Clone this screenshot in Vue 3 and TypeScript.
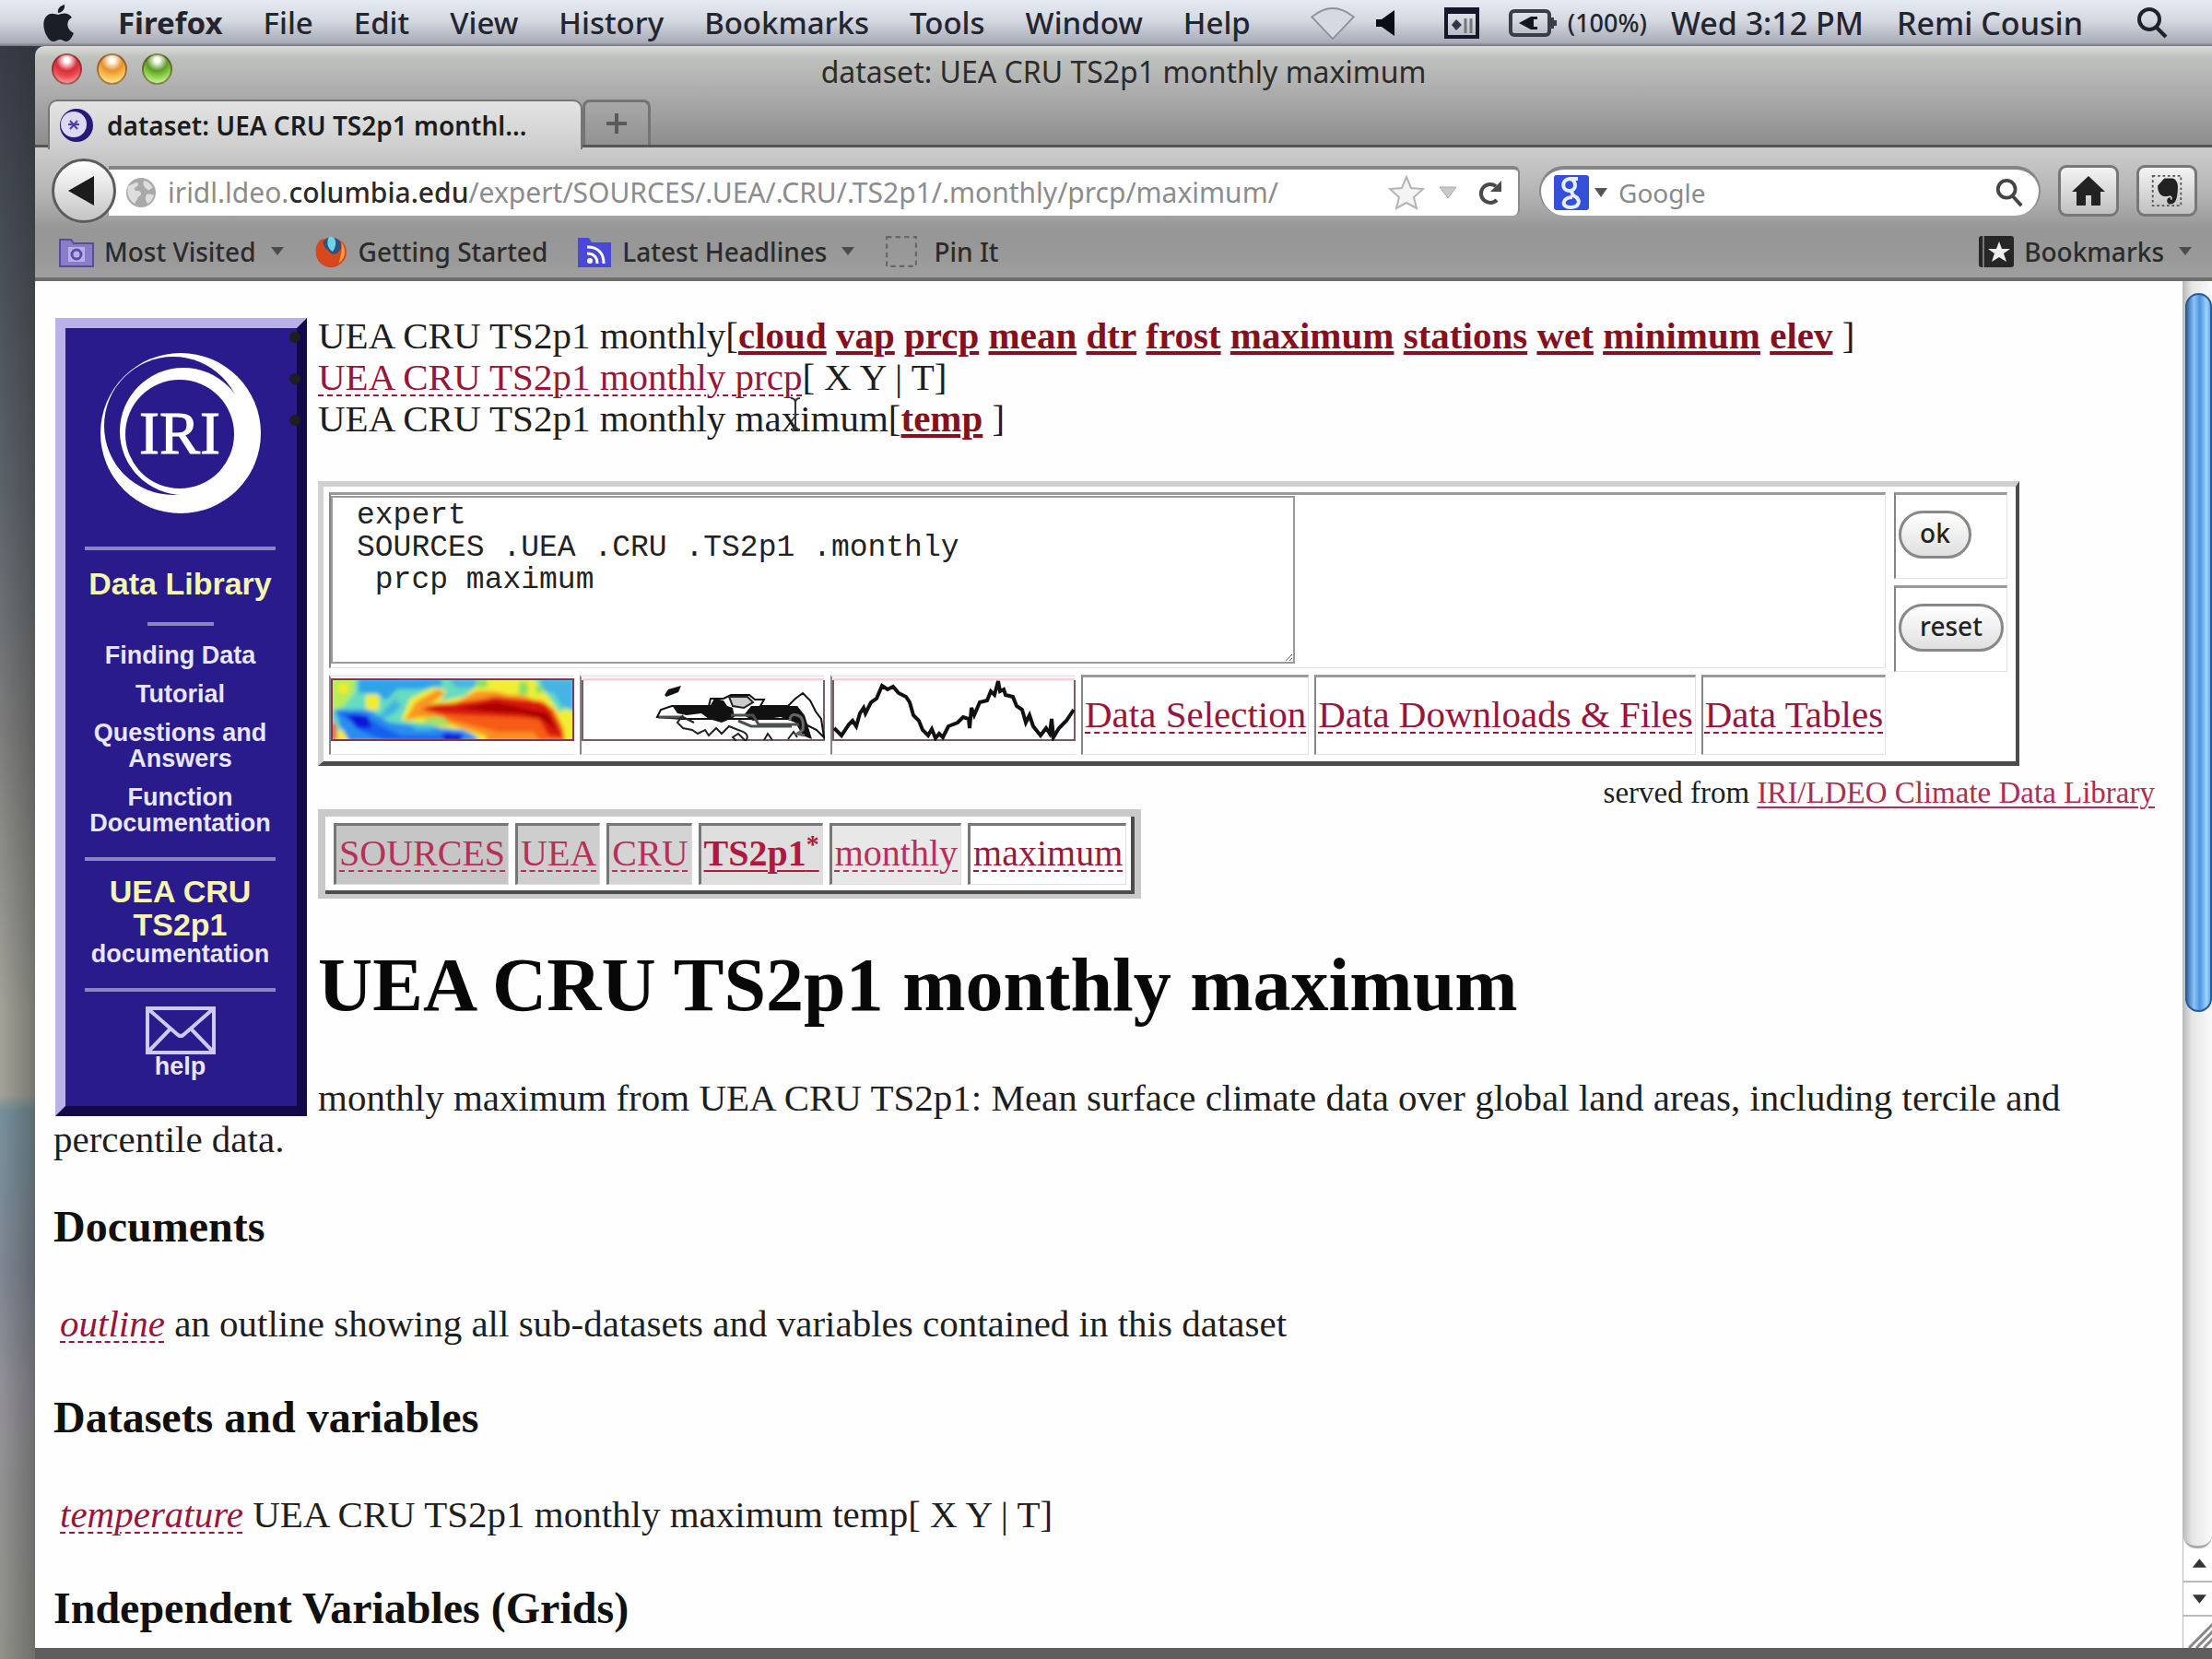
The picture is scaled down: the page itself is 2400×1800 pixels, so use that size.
<script setup lang="ts">
import { ref } from 'vue'

const menus = ['File', 'Edit', 'View', 'History', 'Bookmarks', 'Tools', 'Window', 'Help']
const variables = ['cloud', 'vap', 'prcp', 'mean', 'dtr', 'frost', 'maximum', 'stations', 'wet', 'minimum', 'elev']
const crumbs = [
  { label: 'SOURCES', shade: 's1' },
  { label: 'UEA', shade: 's2' },
  { label: 'CRU', shade: 's3' },
  { label: 'TS2p1', shade: 's4', strong: true },
  { label: 'monthly', shade: 's5' },
  { label: 'maximum', shade: 's6' },
]
const initial = 'expert\nSOURCES .UEA .CRU .TS2p1 .monthly\n prcp maximum'
const code = ref(initial)
const query = ref('')
</script>

<template>
  <div class="screen">
    <header class="menubar">
      <svg class="apple" viewBox="0 0 36 42"><path d="M24 1c1 5-3 9-7 9-1-5 3-8 7-9zM32 15c-7 4-6 13 2 17-2 5-5 9-8 9-3 0-4-2-7-2s-4 2-7 2C5 41-3 22 4 14c4-5 9-3 13-2 4-1 10-4 15 3z" /></svg>
      <nav class="menus">
        <button class="app-name">Firefox</button>
        <button v-for="m in menus" :key="m">{{ m }}</button>
      </nav>
      <div class="status">
        <svg class="wifi" viewBox="0 0 50 38"><path d="M1 12Q25-8 49 12L25 37Z" /></svg>
        <svg class="speaker" viewBox="0 0 20 28"><path d="M0 10h6L20 0v28L6 18H0z" /></svg>
        <svg class="input-menu" viewBox="0 0 38 34"><path d="M2 2h34v30H2z" fill="none" stroke="#15182a" stroke-width="4" /><path d="M2 1h34v6H2z" fill="#15182a" /><path d="M8 19l5-6 6 6-6 6z" fill="#33364a" /><path d="M23 12v16M29 12v16" stroke="#777" stroke-width="3" /></svg>
        <svg class="battery" viewBox="0 0 52 30"><rect x="2" y="2" width="42" height="26" rx="4" fill="none" stroke="#3a3c48" stroke-width="4" /><path d="M45 9h4v3h3v6h-3v3h-4z" fill="#3a3c48" /><path d="M11 15 24 8h7v3h-4v8h4v3h-7z" fill="#15171f" /></svg>
        <span class="percent">(100%)</span>
        <span>Wed 3:12 PM</span>
        <span class="user">Remi Cousin</span>
        <svg class="spot" viewBox="0 0 34 34"><circle cx="14" cy="13" r="11" /><path d="m21 21 11 11" /></svg>
      </div>
    </header>

    <div class="desktop">
      <main class="window">
        <div class="titlebar">
          <div class="lights"><i class="red"></i><i class="amber"></i><i class="green"></i></div>
          <div class="window-title">dataset: UEA CRU TS2p1 monthly maximum</div>
        </div>
        <div class="tabs">
          <button class="tab">
            <svg class="favicon" viewBox="0 0 38 38"><circle cx="19" cy="19" r="18" fill="#241a78" /><circle cx="16" cy="18" r="14" fill="#dcd8f6" /><path d="M12 14l8 9M20 14l-8 9M10 18h12" stroke="#4a3fa8" stroke-width="2" /></svg>
            <span>dataset: UEA CRU TS2p1 monthl...</span>
          </button>
          <button class="newtab" aria-label="New tab"><svg viewBox="0 0 26 26"><path d="M13 2v22M2 13h22" /></svg></button>
        </div>
        <div class="chrome">
          <div class="nav">
            <button class="back" aria-label="Back"><svg viewBox="0 0 28 32"><path d="M28 0v32L0 16z" /></svg></button>
            <div class="url" role="textbox" aria-label="Address">
              <svg class="globe" viewBox="0 0 34 34"><circle cx="17" cy="17" r="16" fill="#a9a9a9" /><path d="M3 10c4-1 9-6 11-3 1 3-5 4-4 7 2 2 7 0 7 4 0 3-4 3-4 6l-3 5C4 26 1 17 3 10zM20 4c4 0 8 4 10 8-3 0-3 3-6 2-2-2-6-5-4-10zM23 19c3-1 6 0 8 1-1 4-4 8-7 9-2-3-3-7-1-10z" fill="#dedede" /></svg>
              <span class="address">iridl.ldeo.<b>columbia.edu</b>/expert/SOURCES/.UEA/.CRU/.TS2p1/.monthly/prcp/maximum/</span>
              <svg class="star" viewBox="0 0 40 38"><path d="m20 2 5 12 13 1-10 9 3 12-11-6-11 6 3-12L2 15l13-1z" /></svg>
              <svg class="drop" viewBox="0 0 20 14"><path d="M1 1h18l-9 12z" /></svg>
              <svg class="reload" viewBox="0 0 28 30"><path d="M21 23A10 10 0 1 1 20 8" fill="none" stroke="#4a4a4a" stroke-width="4" /><path d="M26 2v12H14z" fill="#4a4a4a" /></svg>
            </div>
            <label class="search">
              <svg class="goog" viewBox="0 0 38 38"><rect width="38" height="38" rx="3" fill="#3450d8" /><path d="M26 4H17c-9 1-9 13 0 13 4 0 2 4 4 5 10 5 6 13-3 13-11 0-9-11 2-11M17 4c8 1 8 13 0 13" fill="none" stroke="#e8f0ff" stroke-width="4" /></svg>
              <svg class="mini" viewBox="0 0 14 10"><path d="M0 0h14L7 10z" /></svg>
              <input v-model="query" type="text" placeholder="Google" aria-label="Search" />
              <svg class="lens" viewBox="0 0 34 34"><circle cx="14" cy="13" r="10" /><path d="m20 20 11 12" /></svg>
            </label>
            <button class="square" aria-label="Home"><svg viewBox="0 0 36 32"><path d="M18 0 36 17h-5v15H21V21h-6v11H5V17H0z" /></svg></button>
            <button class="square" aria-label="Clipper"><svg viewBox="0 0 38 40"><rect x="2" y="2" width="34" height="36" fill="none" stroke="#555" stroke-width="2" stroke-dasharray="3 3" /><path d="M8 14 16 5h10c6 2 7 8 6 16-1 10-3 15-9 15-5 0-5-8 0-8l1 3c3 0 1-6-2-5-6 2-14 1-14-12z" /></svg></button>
          </div>
          <div class="bookmarks">
            <a href="#"><svg class="bm" viewBox="0 0 38 34"><path d="M1 4h12l3 4h21v25H1z" fill="#8a7cc6" stroke="#5a4c9c" stroke-width="2" /><path d="M10 12h18v16H10z" fill="#b9b0e4" /><circle cx="19" cy="20" r="5" fill="none" stroke="#5a4cb0" stroke-width="3" /></svg>Most Visited<i class="caret"></i></a>
            <a href="#"><svg class="bm" viewBox="0 0 38 38"><circle cx="19" cy="20" r="17" fill="#c83818" /><circle cx="20" cy="15" r="12" fill="#2a5580" /><path d="M17 2c8-2 10 9 4 17-5-3-8-10-4-17z" fill="#6fd4e8" /><path d="M2 14c2-6 5-9 8-10-1 6 1 10 6 14 3 4 8 6 12 1 4-4 4-8 2-13 8 6 9 17 3 24-8 9-26 8-30-5-1-4-2-7-1-11z" fill="#d8481c" /><path d="M31 8c6 8 5 19-3 24 3-8 4-16 3-24z" fill="#f0a040" /></svg>Getting Started</a>
            <a href="#"><svg class="bm" viewBox="0 0 38 36"><path d="M1 3h12l3 5h21v27H1z" fill="#4a48d8" /><circle cx="14" cy="28" r="3" fill="#fff" /><path d="M11 20c7 0 11 4 11 11M11 13c12 0 18 7 18 18" fill="none" stroke="#fff" stroke-width="3" /></svg>Latest Headlines<i class="caret"></i></a>
            <a href="#"><svg class="bm dotted" viewBox="0 0 34 34"><rect x="2" y="2" width="30" height="30" fill="none" stroke="#666" stroke-width="2" stroke-dasharray="5 4" /></svg>Pin It</a>
            <button class="bm-menu"><svg class="bm" viewBox="0 0 38 34"><rect width="38" height="34" rx="3" fill="#262626" /><path d="M5 0v34" stroke="#777" stroke-width="2" /><path d="m22 6 3 8h9l-7 5 3 9-8-5-8 5 3-9-7-5h9z" fill="#eee" /></svg>Bookmarks<i class="caret"></i></button>
          </div>
        </div>

        <div class="viewport">
          <div class="page">
            <aside class="sidebar">
              <svg class="logo" viewBox="0 0 176 176">
                <circle cx="88" cy="88" r="87" fill="#fff" />
                <circle cx="80" cy="80" r="75" fill="#291b8c" />
                <circle cx="91" cy="86" r="69" fill="#fff" />
                <circle cx="87" cy="89" r="59" fill="#291b8c" />
                <text x="87" y="110" text-anchor="middle">IRI</text>
              </svg>
              <hr />
              <a href="#" class="big">Data Library</a>
              <hr class="short" />
              <a href="#">Finding Data</a>
              <a href="#">Tutorial</a>
              <a href="#">Questions and<br />Answers</a>
              <a href="#">Function<br />Documentation</a>
              <hr />
              <a href="#" class="doc"><span class="big">UEA CRU<br />TS2p1</span><br />documentation</a>
              <hr />
              <a href="#" class="help"><svg viewBox="0 0 78 54"><path d="M3 3h72v48H3zM3 3l32 28q4 4 8 0L75 3M3 51l25-26M75 51 50 25" /></svg>help</a>
            </aside>

            <ul class="paths">
              <li>UEA CRU TS2p1 monthly[<template v-for="v in variables" :key="v"><a href="#" class="strong">{{ v }}</a>{{ ' ' }}</template>]</li>
              <li><a href="#" class="dash">UEA CRU TS2p1 monthly prcp</a>[ X Y | T]</li>
              <li>UEA CRU TS2p1 monthly ma<span class="hover">x<svg class="ibeam" viewBox="0 0 12 36"><path d="M1 1q5 0 5 5v24q0 5-5 5M11 1q-5 0-5 5v24q0 5 5 5" /></svg></span>imum[<a href="#" class="strong">temp</a> ]</li>
            </ul>

            <form class="expert" @submit.prevent @reset.prevent="code = initial">
              <div class="left">
                <div class="cell editor"><textarea v-model="code" aria-label="Expert code" spellcheck="false"></textarea></div>
                <div class="tools">
                  <a href="#" class="cell pic" aria-label="Colour plot">
                    <svg viewBox="0 0 264 68">
                      <defs>
                        <filter id="soft" x="0" y="0" width="1" height="1"><feGaussianBlur stdDeviation="2" /></filter>
                      </defs>
                      <g filter="url(#soft)">
                        <rect width="264" height="68" fill="#66dcc0" />
                        <path d="M30 0h90v8L95 12 72 12 60 24 50 16H30z" fill="#2fa4e8" />
                        <path d="M128 0h30l-2 10h-20zM228 0h36v34l-14-4-8-14-14-2z" fill="#45b4e4" />
                        <path d="M58 34 70 22 76 30 66 40 50 44z" fill="#40b4e0" />
                        <path d="M0 0h26v14L14 30 4 34H0z" fill="#b8ec58" />
                        <path d="M38 18h14v16H38zM8 6h10v10H8zM8 56h10v12H6z" fill="#f4ec20" />
                        <path d="M76 46 86 22l24-12 16 3-8 12 28-6 20-18h54l14 16 14 20 8-4 10 6v30H150l-36-18-38-6z" fill="#f0ee30" />
                        <path d="M158 2h12v8h-12zM204 4h10v14h-10zM222 8h8v8h-8z" fill="#8ae060" />
                        <path d="M80 46 92 26l24-14 8 4-18 14 30-4 22-12 20 0 16 4h14l22 10 8 22 4 18H184l-42-14-26-10-20-2z" fill="#fa9424" />
                        <path d="M94 50 108 42h14l8 10z" fill="#a8e060" />
                        <path d="M104 32 150 24l38-2 40 2 14 10 10 20 2 14H192l-12-10-54-14z" fill="#f65c14" />
                        <path d="M98 34 112 28 150 26l28-6 36 4 20 4 12 22 6 14-16-2-10-18-26-2-50-2-34-2z" fill="#d81808" />
                        <path d="M136 32 180 26l36 8 20 4 10 20-14-12-24-8-30-2z" fill="#a80404" />
                        <path d="M170 58h50l8 10h-60z" fill="#fa8c24" />
                        <path d="M4 34 40 34l24 14 30 4 50 4 12 6 6 6H20L10 52z" fill="#2c8cf0" />
                        <path d="M90 50h20v6H90z" fill="#40c4d8" />
                        <path d="M6 36 32 38l24 14 20 10 40 0 10-4 14 4 6 6H60L34 58 20 46z" fill="#1460f0" />
                        <path d="M18 40h22l4 14H28zM122 60h20v8h-20z" fill="#0818d8" />
                        <path d="M0 48h6v20H0z" fill="#f05030" />
                      </g>
                      <path d="M1 1h262v66H1z" fill="none" stroke="#8a3350" stroke-width="2" />
                    </svg>
                  </a>
                  <a href="#" class="cell pic" aria-label="Contour plot">
                    <svg viewBox="0 0 264 68">
                      <path d="M1 1h262" stroke="#f3cfdc" stroke-width="3" /><path d="M1 2v65h262V2" class="frame" />
                      <path d="M90 18 94 12l14-4-3 7-13 5z" fill="#111" />
                      <path d="M82 42 86 34 98 30h40l2-8h14l8-4h20l6 5h10l-4 7h30l8-8 8-6 8 8 6 12 6 8 3 20-8-8-12-6-2-6H110z" fill="#fff" stroke="#111" stroke-width="2" />
                      <path d="M98 29h42l4-7 10 2 4 6 6 2 2 10-14 6-14-4-8-6-16 2-10-2zM184 30h50l8 10 8 26-10-4-8-14-16-6-30 4-10-6z" fill="#111" />
                      <path d="M160 20h20l6 6-10 6-12-2z" fill="#ccc" stroke="#222" stroke-width="2" />
                      <path d="M84 42h26M162 40h24l6 10h44M170 46l14 6h44" fill="none" stroke="#4a5250" stroke-width="3" />
                      <path d="M110 40l-6 8 6 6 10 2 6 4 8-4 4 6 8-8 6 6 8-8 10 4q14 4 8 12l-8-8-6 4 4 4M110 42l12 6M198 67l4-7 5 7M224 66l6-8 4 6" fill="none" stroke="#222" stroke-width="2" />
                      <path d="M226 46q0-8 8-6t6 16l-6 4 8 2" fill="none" stroke="#666" stroke-width="3" />
                    </svg>
                  </a>
                  <a href="#" class="cell pic" aria-label="Line plot">
                    <svg viewBox="0 0 264 68">
                      <path d="M1 1h262" stroke="#f3cfdc" stroke-width="3" /><path d="M1 2v65h262V2" class="frame" />
                      <path d="M2 54 10 62 18 50 22 46 26 52 30 38 34 32 36 38 42 26 48 22 54 8 60 12 66 9 72 16 80 20 84 26 88 40 94 46 98 56 104 62 108 55 112 65 116 60 120 64 126 52 136 48 142 42 148 44 149 54 151 32 154 40 160 26 168 24 172 14 176 18 180 3 182 14 186 12 188 18 196 20 200 30 206 34 210 48 214 40 218 52 226 62 232 54 236 60 238 44 240 64 246 54 254 46 262 34" fill="none" stroke="#111" stroke-width="4" />
                    </svg>
                  </a>
                  <div class="cell"><a href="#" class="dash">Data Selection</a></div>
                  <div class="cell"><a href="#" class="dash">Data Downloads &amp; Files</a></div>
                  <div class="cell"><a href="#" class="dash">Data Tables</a></div>
                </div>
              </div>
              <div class="right">
                <div class="cell"><button type="submit" class="pill">ok</button></div>
                <div class="cell"><button type="reset" class="pill">reset</button></div>
              </div>
            </form>

            <p class="served">served from <a href="#">IRI/LDEO Climate Data Library</a></p>

            <nav class="crumbs">
              <div class="crumb-row">
                <div v-for="c in crumbs" :key="c.label" class="crumb" :class="c.shade">
                  <a href="#" :class="c.strong ? 'bold' : 'dash'">{{ c.label }}<sup v-if="c.strong">*</sup></a>
                </div>
              </div>
            </nav>

            <h1>UEA CRU TS2p1 monthly maximum</h1>
            <p class="about">monthly maximum from UEA CRU TS2p1: Mean surface climate data over global land areas, including tercile and percentile data.</p>
            <h3>Documents</h3>
            <p class="entry"><a href="#" class="dash"><i>outline</i></a> an outline showing all sub-datasets and variables contained in this dataset</p>
            <h3>Datasets and variables</h3>
            <p class="entry"><a href="#" class="dash"><i>temperature</i></a> UEA CRU TS2p1 monthly maximum temp[ X Y | T]</p>
            <h3>Independent Variables (Grids)</h3>
          </div>
          <div class="scrollbar">
            <div class="track"><div class="thumb"></div></div>
            <svg class="arrow" viewBox="0 0 32 37"><path d="M10 22h16L18 12z" /></svg>
            <svg class="arrow" viewBox="0 0 32 37"><path d="M10 14h16L18 24z" /></svg>
            <svg class="grip" viewBox="0 0 32 34"><path d="M6 34 32 8M14 34 32 16M22 34 32 24" /></svg>
          </div>
        </div>
      </main>
    </div>
  </div>
</template>

<style>
body { margin: 0; }
</style>

<style scoped>
* { box-sizing: border-box; }
button { border: 0; background: none; padding: 0; font: inherit; color: inherit; }
.screen { min-height: 100vh; display: flex; flex-direction: column; overflow: hidden; font-family: "Noto Sans", "Open Sans", sans-serif; color: #15161c; }
svg { flex: none; display: block; }

.menubar { height: 50px; display: flex; align-items: center; justify-content: space-between; padding: 0 48px 0 46px; font-size: 33px; line-height: 50px; font-weight: 500; color: #24252e; background: linear-gradient(#e6ebf3, #d3d8e1 45%, #a9acb8 92%, #77777f); }
.apple { width: 36px; height: 42px; fill: #1a1e26; }
.menus { display: flex; gap: 44px; flex: 1; margin-left: 46px; }
.menus .app-name { font-weight: 700; }
.status { display: flex; align-items: center; font-size: 34px; }
.wifi { width: 50px; height: 36px; fill: #d4d9e2; stroke: #8c929c; stroke-width: 2; margin-right: 22px; }
.speaker { width: 20px; height: 28px; fill: #0c0d14; margin-right: 54px; }
.input-menu { width: 38px; height: 34px; margin-right: 32px; }
.battery { width: 52px; height: 30px; margin-right: 12px; }
.percent { font-size: 27px; margin-right: 26px; }
.user { margin: 0 58px 0 36px; }
.spot { width: 34px; height: 34px; fill: none; stroke: #20222a; stroke-width: 4; }

.desktop { flex: 1; display: flex; padding-left: 38px; background: linear-gradient(90deg, transparent, rgba(40, 40, 40, 0.35)) 0 0 / 38px 100% no-repeat, linear-gradient(#363c47, #5c646b 28%, #7c7c7c 42%, #a3a399 60%, #a3a399 65%, #76929c 66%, #7f8794 76%, #949298 84%, #92948a); }
.window { flex: 1; min-width: 0; display: flex; flex-direction: column; border-bottom: 12px solid #5e5e5e; border-radius: 10px 0 0 0; background: linear-gradient(#dcdfdc, #bfc1bf 12px, #8c8c8c 110px); }
.titlebar { display: flex; align-items: center; height: 58px; position: relative; }
.lights { display: flex; gap: 16px; padding-left: 18px; position: absolute; top: 8px; left: 0; }
.lights i { width: 33px; height: 34px; border-radius: 50%; border: 2px solid rgba(80, 30, 20, 0.5); }
.red { background: radial-gradient(circle at 50% 18%, #fff 0 8%, #d8303c 40%, #e84850 60%, #ffb0b0 95%); }
.amber { background: radial-gradient(circle at 50% 18%, #fff 0 8%, #e8902c 40%, #f8b84c 60%, #fff0a0 95%); }
.green { background: radial-gradient(circle at 50% 18%, #fff 0 8%, #5c9c28 40%, #84cc44 60%, #e0ffb0 95%); }
.window-title { flex: 1; text-align: center; font-size: 32px; line-height: 50px; padding-bottom: 2px; color: #2c2c2c; }

.tabs { display: flex; height: 52px; padding-left: 14px; border-bottom: 3px solid #555; }
.tab { display: flex; align-items: center; gap: 14px; width: 580px; height: 54px; padding: 0 10px 0 10px; border: 2px solid #767676; border-bottom: 0; border-radius: 10px 10px 0 0; background: linear-gradient(#e4e4e4, #cdcdcd); font-size: 28px; line-height: 40px; font-weight: 600; color: #1c1c1c; position: relative; }
.favicon { width: 38px; height: 38px; }
.newtab { width: 74px; display: grid; place-items: center; border: 3px solid #747474; border-bottom: 0; border-radius: 8px 8px 0 0; background: linear-gradient(#a8a8a8, #929292); }
.newtab svg { width: 26px; height: 26px; stroke: #5a5a5a; stroke-width: 4; }

.chrome { background: linear-gradient(#cdcdcd, #b4b4b4 50px, #969696 90px, #999 120px, #a0a0a0); border-bottom: 4px solid #6c6e6c; }
.nav { display: flex; align-items: center; height: 88px; padding: 5px 16px 0 18px; }
.back { width: 70px; height: 70px; border-radius: 50%; border: 3px solid #5c5c5c; background: linear-gradient(#fff, #c4c4c4); display: grid; place-items: center; position: relative; z-index: 1; }
.back svg { width: 28px; height: 32px; margin-right: 6px; fill: #1c1c1c; }
.url { flex: 1; min-width: 0; display: flex; align-items: center; height: 54px; margin-left: -8px; padding: 0 16px 0 18px; background: #fff; border-top: 4px solid #858585; border-right: 2px solid #8a8a8a; border-radius: 0 7px 7px 0; }
.globe { width: 34px; height: 34px; margin-right: 12px; }
.address { flex: 1; min-width: 0; white-space: nowrap; font-size: 30px; line-height: 46px; color: #8c8c8c; }
.address b { font-weight: 500; color: #2a2a2a; }
.star { width: 40px; height: 38px; fill: #f4f4f4; stroke: #b4b4b4; stroke-width: 2; margin-right: 15px; }
.drop { width: 20px; height: 14px; fill: #c9c9c9; stroke: #aaa; margin-right: 22px; }
.reload { width: 28px; height: 30px; }
.search { display: flex; align-items: center; width: 544px; height: 54px; margin: 0 19px 0 21px; padding: 0 16px 0 14px; background: #fff; border-top: 4px solid #858585; border-left: 2px solid #8a8a8a; border-right: 2px solid #8a8a8a; border-radius: 27px; }
.goog { width: 38px; height: 38px; }
.mini { width: 14px; height: 10px; margin: 0 12px 0 6px; fill: #555; }
.search input { flex: 1; min-width: 0; border: 0; outline: 0; padding: 0; background: none; font: 28px/44px "Noto Sans", sans-serif; }
.search input::placeholder { color: #8a8a8a; opacity: 1; }
.lens { width: 32px; height: 32px; fill: none; stroke: #444; stroke-width: 4; }
.square { width: 66px; height: 56px; border: 3px solid #777; border-radius: 9px; background: linear-gradient(#f4f4f4, #c0c0c0); display: grid; place-items: center; }
.square + .square { margin-left: 19px; }
.square svg { width: 36px; height: 36px; fill: #222; }
.bookmarks { display: flex; align-items: center; height: 53px; padding: 0 22px 4px 26px; gap: 32px; font-size: 28px; line-height: 44px; font-weight: 500; color: #2b2b2b; }
.bookmarks a, .bm-menu { display: flex; align-items: center; color: inherit; text-decoration: none; }
.bm { width: 38px; height: 36px; margin-right: 11px; }
.dotted { margin-right: 16px; }
.caret { border: 7px solid transparent; border-top: 9px solid #4c4c4c; border-bottom: 0; margin-left: 16px; }
.bm-menu { margin-left: auto; }

.viewport { flex: 1; display: flex; background: #fefefe; min-height: 0; }
.page { flex: 1; min-width: 0; padding: 37px 30px 0 20px; font: 41px/45px "Liberation Serif", "Times New Roman", serif; color: #1e1e1e; }
.page a { color: #98163a; text-underline-offset: 5px; text-decoration-thickness: 2px; }
.page a.strong { font-weight: 700; color: #86101e; text-decoration-thickness: 4px; text-underline-offset: 3px; }
.page a.dash { text-decoration-style: dashed; }

.sidebar { float: left; width: 273px; height: 866px; margin: 3px 12px 0 2px; padding: 26px 22px 0 20px; border: 11px solid; border-color: #b9b1ea #120a48 #120a48 #b9b1ea; background: #291b8c; display: flex; flex-direction: column; align-items: center; font: 700 27px/28px "Liberation Sans", Arial, sans-serif; text-align: center; }
.page .sidebar a { color: #e9e6ff; text-decoration: none; }
.logo { width: 176px; height: 176px; }
.logo text { font: 66px "Liberation Serif", serif; fill: #fff; stroke: #fff; stroke-width: 1; }
.sidebar hr { width: 207px; height: 4px; margin: 35px 0 18px; border: 0; background: #8d84c4; }
.page .sidebar .big { font-size: 34px; line-height: 36px; color: #f6f6b0; }
.sidebar a + a { margin-top: 14px; }
.sidebar a + hr { margin: 23px 0 15px; }
.sidebar .big + hr.short { width: 72px; margin: 24px 0 18px; }
.help svg { width: 78px; height: 54px; fill: none; stroke: #cfc9f6; stroke-width: 4; }
.sidebar .help { line-height: 24px; }

.paths { margin: 0 0 45px; padding: 0; }
.hover { position: relative; }
.ibeam { position: absolute; left: 9px; top: 0; width: 12px; height: 36px; fill: none; stroke: #333; stroke-width: 2; }

.expert { display: flex; gap: 9px; width: fit-content; padding: 6px 9px 7px 6px; border-style: solid; border-width: 6px 4px 5px 6px; border-color: #cfcfcf #4c4c4c #4c4c4c #d2d2d2; background: #fff; }
.left, .right { display: flex; flex-direction: column; gap: 7px; }
.cell { border-top: 3px solid #9a9a9a; border-left: 2px solid #858585; border-right: 1px solid #e2e2e2; border-bottom: 1px solid #eadfe4; }
.editor { height: 191px; padding-top: 1px; }
.editor textarea { display: block; width: 1046px; height: 182px; padding: 2px 26px; border: 2px solid #999; border-radius: 0; outline: 0; font: 33px/35px "Liberation Mono", "Courier New", monospace; color: #222; background: #fff; }
.tools { display: flex; gap: 6px; }
.tools .cell { height: 87px; padding: 0 2px 2px; display: flex; align-items: center; white-space: nowrap; }
.tools .pic { border-top-color: #eee; border-right: 0; padding: 1px 0 0; align-items: flex-start; }
.pic svg { width: 264px; height: 68px; }
.frame { fill: none; stroke: #7a5a68; stroke-width: 2; }
.right .cell { width: 123px; height: 94px; padding: 16px 0 0 3px; }
.pill { height: 52px; padding: 0 20px 4px; border: 3px solid #888; border-radius: 26px; background: linear-gradient(#fff, #e0e0e0); font: 500 28px/40px "Noto Sans", sans-serif; color: #222; }
.served { margin: 0; padding-top: 11px; text-align: right; font-size: 33px; line-height: 36px; }
.page .served a { text-underline-offset: 4px; color: #b02c50; }

.crumbs { display: flow-root; width: fit-content; padding: 8px 7px 5px 8px; background: #c9c9c9; }
.crumb-row { display: flex; gap: 7px; padding: 7px 5px 6px 9px; background: #fff; border-right: 4px solid #4c4c4c; border-bottom: 4px solid #4c4c4c; font-size: 40px; }
.crumb { height: 67px; padding: 7px 3px 0; border-top: 3px solid #777; border-left: 3px solid #777; border-right: 1px solid #ddd; border-bottom: 1px solid #ddd; white-space: nowrap; }
.page .crumb a { color: #b8305a; }
.page .crumb a.bold { font-weight: 700; color: #b01840; }
.page .s6 a.dash { color: #981a3c; }
.crumb sup { font-size: 28px; line-height: 1px; }
.s1 { background: #c6c6c6; }
.s2 { background: #cecece; }
.s3 { background: #d4d4d4; }
.s4 { background: #dedede; }
.s5 { background: #e8e8e8; }

h1 { margin: 48px 0 54px; font-size: 82px; line-height: 92px; color: #080808; }
.about { margin: 0 0 45px; padding-right: 40px; }
h3 { margin: 0 0 56px; font-size: 48px; line-height: 54px; color: #101010; }
h3:last-child { margin: 0; }
.entry { margin: 0 0 52px; padding-left: 7px; }

.scrollbar { width: 32px; display: flex; flex-direction: column; background: #fff; border-left: 1px solid #bbb; }
.track { flex: 1; padding: 13px 0 0 2px; border-radius: 0 0 14px 14px; background: linear-gradient(90deg, #bdbdbd, #e6e6e6 30%, #fafafa); border-bottom: 3px solid #aaa; }
.thumb { height: 54%; min-height: 780px; border-radius: 15px; border: 2px solid #2b5a9c; background: linear-gradient(90deg, #3a6cb4, #8cc4f4 30%, #4c94e0 55%, #9cd4fc 85%, #6aa8e4); }
.arrow { width: 31px; height: 37px; fill: #333; border-bottom: 2px solid #bbb; }
.grip { width: 32px; height: 34px; fill: none; stroke: #888; stroke-width: 3; }
</style>
